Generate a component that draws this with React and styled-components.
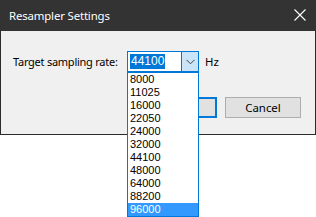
import React from "react";
import styled, { createGlobalStyle } from "styled-components";

const Global = createGlobalStyle`
  html, body { margin: 0; padding: 0; background: #ffffff; }
  * { box-sizing: border-box; }
`;

const Page = styled.div`
  width: 316px;
  height: 217px;
  position: relative;
  overflow: hidden;
  background: #ffffff;
`;

const Window = styled.div`
  width: 316px;
  height: 135px;
  border: 1px solid #2b2b2b;
  border-top: none;
  display: flex;
  flex-direction: column;
  background: #f0f0f0;
`;

const TitleBar = styled.div`
  height: 31px;
  background: #333333;
  margin: 0 -1px;
  display: flex;
  align-items: center;
  justify-content: space-between;
  padding: 0 10px 1px 9px;
`;

const Title = styled.span`
  font-family: "Noto Sans", "Open Sans", sans-serif;
  font-size: 11.4px;
  color: #ffffff;
  letter-spacing: -0.15px;
`;

const Body = styled.div`
  flex: 1;
  display: flex;
  flex-direction: column;
  padding: 20px 14px 0 12px;
`;

const Row = styled.div`
  display: flex;
  align-items: center;
  height: 21px;
`;

const Label = styled.span`
  width: 114px;
  flex-shrink: 0;
  white-space: nowrap;
  font-family: "Noto Sans", "Open Sans", sans-serif;
  font-size: 11px;
  color: #000000;
  letter-spacing: -0.25px;
`;

const Combo = styled.div`
  position: relative;
  width: 72px;
  flex-shrink: 0;
  height: 21px;
  border: 1px solid #0078d7;
  background: #ffffff;
  display: flex;
`;

const Field = styled.div`
  flex: 1;
  display: flex;
  align-items: center;
  padding-left: 2px;
`;

const Selected = styled.span`
  background: #0078d7;
  color: #ffffff;
  font-family: "Liberation Sans", Arial, sans-serif;
  font-size: 12px;
  line-height: 15px;
  padding: 0 1px;
`;

const ArrowButton = styled.div`
  width: 17px;
  background: #cce4f7;
  border-left: 1px solid #0078d7;
  display: flex;
  align-items: center;
  justify-content: center;
`;

const Unit = styled.span`
  margin-left: 6px;
  font-family: "Noto Sans", "Open Sans", sans-serif;
  font-size: 11.4px;
  color: #000000;
`;

const List = styled.div`
  position: absolute;
  left: -1px;
  top: 20px;
  width: 72px;
  border: 1px solid #0078d7;
  background: #ffffff;
  z-index: 10;
  display: flex;
  flex-direction: column;
`;

const Item = styled.div`
  height: 13px;
  line-height: 13px;
  padding-left: 2px;
  font-family: "Liberation Sans", Arial, sans-serif;
  font-size: 11px;
  color: ${(p) => (p.$active ? "#ffffff" : "#000000")};
  background: ${(p) => (p.$active ? "#3399ff" : "transparent")};
`;

const Buttons = styled.div`
  display: flex;
  justify-content: flex-end;
  gap: 8px;
  margin-top: 25px;
`;

const Button = styled.div`
  width: 76px;
  height: 21px;
  background: #e1e1e1;
  border: ${(p) => (p.$default ? "2px solid #0078d7" : "1px solid #adadad")};
  display: flex;
  align-items: center;
  justify-content: center;
  font-family: "Noto Sans", "Open Sans", sans-serif;
  font-size: 11.4px;
  color: #000000;
`;

const rates = ["8000", "11025", "16000", "22050", "24000", "32000", "44100", "48000", "64000", "88200", "96000"];

export default function App() {
  return (
    <Page>
      <Global />
      <Window>
        <TitleBar>
          <Title>Resampler Settings</Title>
          <svg width="12" height="12" viewBox="0 0 12 12">
            <path d="M0.5 0.5 L11.5 11.5 M11.5 0.5 L0.5 11.5" stroke="#ffffff" strokeWidth="1.1" fill="none" />
          </svg>
        </TitleBar>
        <Body>
          <Row>
            <Label>Target sampling rate:</Label>
            <Combo>
              <Field>
                <Selected>44100</Selected>
              </Field>
              <ArrowButton>
                <svg width="9" height="6" viewBox="0 0 9 6">
                  <path d="M0.5 0.8 L4.5 4.8 L8.5 0.8" stroke="#444" strokeWidth="1" fill="none" />
                </svg>
              </ArrowButton>
              <List>
                {rates.map((r, i) => (
                  <Item key={r} $active={i === rates.length - 1}>{r}</Item>
                ))}
              </List>
            </Combo>
            <Unit>Hz</Unit>
          </Row>
          <Buttons>
            <Button $default>OK</Button>
            <Button>Cancel</Button>
          </Buttons>
        </Body>
      </Window>
    </Page>
  );
}
